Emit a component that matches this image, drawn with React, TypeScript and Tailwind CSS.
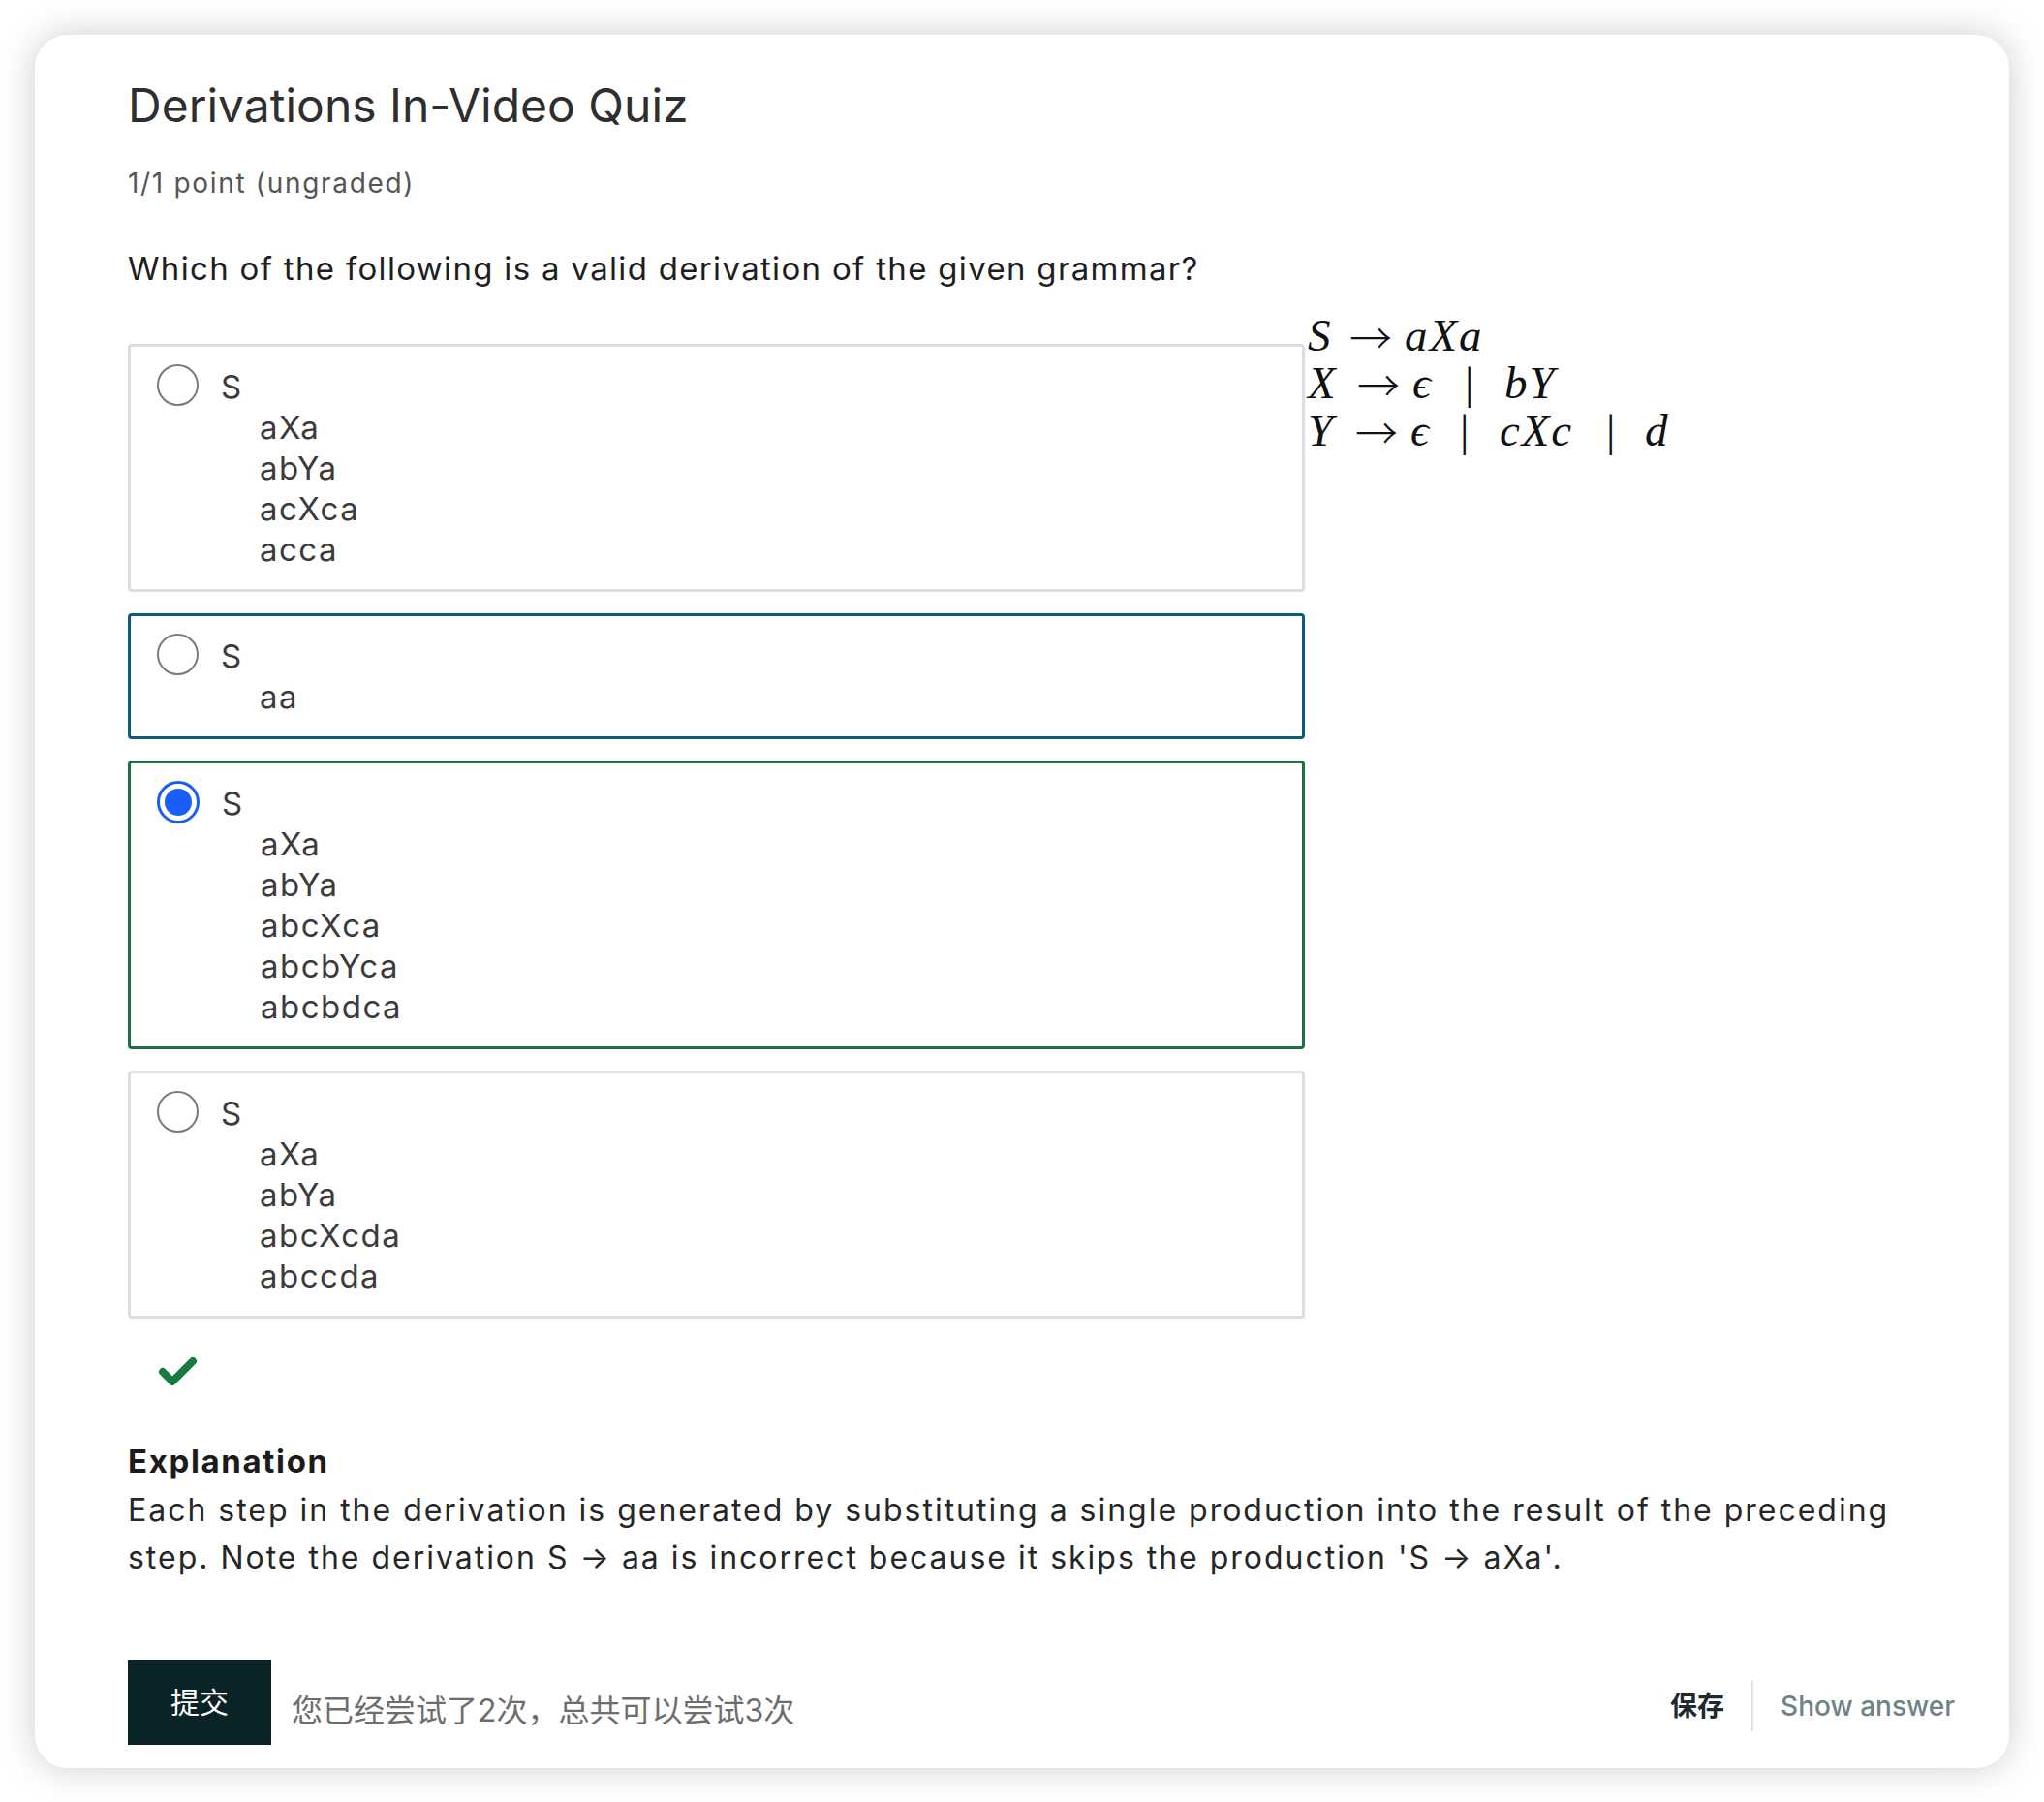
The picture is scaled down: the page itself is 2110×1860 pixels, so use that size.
import { ReactNode } from 'react';

type ChoiceState = 'idle' | 'focus' | 'correct';

const choices: { lines: string[]; state: ChoiceState }[] = [
  { lines: ['aXa', 'abYa', 'acXca', 'acca'], state: 'idle' },
  { lines: ['aa'], state: 'focus' },
  { lines: ['aXa', 'abYa', 'abcXca', 'abcbYca', 'abcbdca'], state: 'correct' },
  { lines: ['aXa', 'abYa', 'abcXcda', 'abccda'], state: 'idle' },
];

function Radio({ checked }: { checked: boolean }) {
  if (checked) {
    return (
      <span className="mt-[-2px] flex h-[44px] w-[44px] shrink-0 items-center justify-center rounded-full border-[3px] border-[#1b5ef7] bg-white">
        <span className="h-[28px] w-[28px] rounded-full bg-[#1b5ef7]" />
      </span>
    );
  }
  return <span className="mt-[-2px] h-[43px] w-[43px] shrink-0 rounded-full border-2 border-[#7a7a7a] bg-white" />;
}

function Choice({ lines, state }: { lines: string[]; state: ChoiceState }) {
  const border =
    state === 'focus' ? 'border-[#0e5a82]' : state === 'correct' ? 'border-[#1c7041]' : 'border-[#dddddd]';
  return (
    <div className={`flex items-start gap-[23px] rounded-[4px] border-[3px] ${border} bg-white py-5 pl-[27px] pr-6`}>
      <Radio checked={state === 'correct'} />
      <div className="text-[33px] leading-[42px] tracking-[0.045em] text-[#3b3b3b]">
        <div>S</div>
        {lines.map((l) => (
          <div key={l} className="pl-10">
            {l}
          </div>
        ))}
      </div>
    </div>
  );
}

function T({ w, children }: { w?: string; children: ReactNode }) {
  return <span className={`inline-block ${w ?? ''}`}>{children}</span>;
}

function Arrow() {
  return (
    <span className="inline-block w-[57px] align-[-4px] font-['Noto_Sans_CJK_SC',sans-serif] text-[44px] font-light not-italic leading-none tracking-normal">
      →
    </span>
  );
}

function Bar({ w }: { w: string }) {
  return <span className={`inline-block ${w} not-italic tracking-normal`}>|</span>;
}

function Line({ children }: { children: ReactNode }) {
  return <div className="h-[49px] overflow-visible">{children}</div>;
}

function Grammar() {
  return (
    <div className="-mt-[33px] ml-[3px] whitespace-nowrap font-['Liberation_Serif','DejaVu_Serif',serif] text-[47px] italic leading-[49px] tracking-[0.04em] text-[#111]">
      <Line>
        <T w="w-[43px]">S</T>
        <Arrow />
        <T>aXa</T>
      </Line>
      <Line>
        <T w="w-[51px]">X</T>
        <Arrow />
        <T w="w-[54px]">ϵ</T>
        <Bar w="w-[41px]" />
        <T>bY</T>
      </Line>
      <Line>
        <T w="w-[49px]">Y</T>
        <Arrow />
        <T w="w-[51px]">ϵ</T>
        <Bar w="w-[41px]" />
        <T w="w-[110px]">cXc</T>
        <Bar w="w-[40px]" />
        <T>d</T>
      </Line>
    </div>
  );
}

export default function App() {
  return (
    <div className="h-[1860px] w-[2110px] bg-white p-[36px] font-['Inter','Noto_Sans_CJK_SC',sans-serif]">
      <div className="flex h-[1789px] flex-col rounded-[34px] bg-white pl-[96px] pr-[56px] pt-[45px] shadow-[0_0_38px_rgba(0,0,0,0.2)]">
        <div className="pr-[40px]">
          <h1 className="text-[48px] font-normal leading-[56px] text-[#2e2e2e]">Derivations In-Video Quiz</h1>
          <p className="mt-[34px] text-[28px] leading-[36px] tracking-[0.06em] text-[#555]">1/1 point (ungraded)</p>
          <p className="mt-[50px] text-[33px] leading-[40px] tracking-[0.04em] text-[#1e1e1e]">
            Which of the following is a valid derivation of the given grammar?
          </p>

          <div className="mt-[58px] flex items-start">
            <div className="flex w-[1215px] shrink-0 flex-col gap-[22px]">
              {choices.map((c, i) => (
                <Choice key={i} lines={c.lines} state={c.state} />
              ))}
            </div>
            <Grammar />
          </div>

          <svg className="ml-[30px] mt-[38px] block" width="42" height="34" viewBox="0 0 42 34">
            <polyline
              points="6,17 16,27 37,6"
              fill="none"
              stroke="#187a41"
              strokeWidth="8"
              strokeLinecap="round"
              strokeLinejoin="round"
            />
          </svg>

          <h3 className="mt-[52px] text-[33px] font-bold leading-[46px] tracking-[0.05em] text-[#1b1b1b]">
            Explanation
          </h3>
          <p className="mt-[3px] text-[32px] leading-[49px] tracking-[0.062em] text-[#262626]">
            Each step in the derivation is generated by substituting a single production into the result of the
            preceding step. Note the derivation S → aa is incorrect because it skips the production 'S → aXa'.
          </p>
        </div>

        <div className="mb-[24px] mt-auto flex items-center">
          <button className="flex h-[88px] w-[148px] items-center justify-center bg-[#0a2327] text-[30px] text-white">
            提交
          </button>
          <span className="ml-[21px] mt-[18px] text-[32px] text-[#6d6d6d]">您已经尝试了2次，总共可以尝试3次</span>
          <div className="ml-auto mt-[8px] flex items-center">
            <span className="text-[28px] font-bold text-[#1e2b2e]">保存</span>
            <span className="mx-[28px] h-[52px] w-[2px] bg-[#e2e2e2]" />
            <span className="text-[28px] font-medium text-[#6f8286]">Show answer</span>
          </div>
        </div>
      </div>
    </div>
  );
}
